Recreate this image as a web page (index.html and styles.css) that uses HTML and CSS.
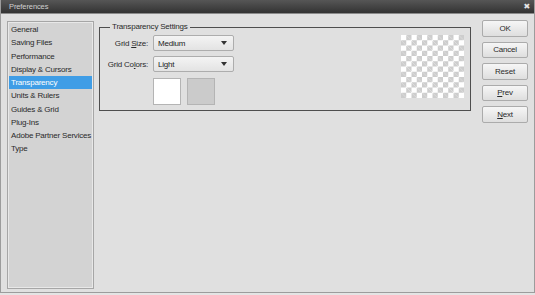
FILE: index.html
```html
<!DOCTYPE html>
<html>
<head>
<meta charset="utf-8">
<link rel="stylesheet" href="styles.css">
</head>
<body>
<div class="window">
  <div class="titlebar">
    <span class="title">Preferences</span>
    <span class="close">&#x2716;</span>
  </div>
  <div class="content">
    <ul class="nav">
      <li>General</li>
      <li>Saving Files</li>
      <li>Performance</li>
      <li>Display &amp; Cursors</li>
      <li class="active">Transparency</li>
      <li>Units &amp; Rulers</li>
      <li>Guides &amp; Grid</li>
      <li>Plug-Ins</li>
      <li>Adobe Partner Services</li>
      <li>Type</li>
    </ul>
    <fieldset class="group">
      <legend>Transparency Settings</legend>
      <div class="group-body">
        <div class="form">
          <label class="lbl">Grid <u>S</u>ize:</label>
          <div class="select">Medium<span class="arrow"></span></div>
          <label class="lbl">Grid Co<u>l</u>ors:</label>
          <div class="select">Light<span class="arrow"></span></div>
          <div></div>
          <div class="swatches">
            <div class="swatch white"></div>
            <div class="swatch gray"></div>
          </div>
        </div>
        <div class="checker"></div>
      </div>
    </fieldset>
    <div class="buttons">
      <div class="btn">OK</div>
      <div class="btn">Cancel</div>
      <div class="btn">Reset</div>
      <div class="btn"><u>P</u>rev</div>
      <div class="btn"><u>N</u>ext</div>
    </div>
  </div>
</div>
</body>
</html>
```
FILE: styles.css
```css
html, body {
  margin: 0;
  padding: 0;
}
body {
  width: 535px;
  height: 295px;
  background: #e4e4e4;
  font-family: "Liberation Sans", Arial, sans-serif;
  font-size: 8px;
  letter-spacing: -0.2px;
  color: #2a2a2a;
  overflow: hidden;
}
.window {
  width: 533px;
  height: 292px;
  background: #e0e0e0;
  border-left: 1px solid #9c9c9c;
  border-right: 1px solid #9c9c9c;
  border-bottom: 1px solid #9c9c9c;
  display: flex;
  flex-direction: column;
}
.titlebar {
  height: 13px;
  background: linear-gradient(#565656, #333333);
  border-bottom: 1px solid #8a8a8a;
  display: flex;
  align-items: center;
  justify-content: space-between;
  padding: 0 4px 0 8px;
}
.title {
  color: #d0d0d0;
  font-size: 7.5px;
  letter-spacing: -0.1px;
}
.close {
  color: #e6e6e6;
  font-family: "DejaVu Sans", sans-serif;
  font-size: 8px;
  font-weight: bold;
}
.content {
  display: flex;
  align-items: flex-start;
  padding: 7px 0 0 6px;
}
.nav {
  list-style: none;
  margin: 0;
  padding: 1px 0 0 0;
  width: 85px;
  height: 265px;
  background: #d3d3d3;
  border: 1px solid #a6a6a6;
  box-shadow: inset 0 0 0 1px #e8e8e8;
}
.nav li {
  height: 13.25px;
  line-height: 13.25px;
  padding-left: 3px;
  color: #2a2a2a;
  white-space: nowrap;
}
.nav li.active {
  background: #3f9de6;
  color: #ffffff;
  margin: 0 1px;
  padding-left: 2px;
}
.group {
  margin: 2px 0 0 5px;
  width: 370px;
  border: 1px solid #4e4e4e;
  padding: 0 0 5px 0;
  min-inline-size: 0;
}
.group legend {
  margin-left: 10px;
  padding: 0 2px;
  line-height: 8px;
  color: #2a2a2a;
}
.group-body {
  display: flex;
  justify-content: space-between;
  align-items: flex-start;
  padding-top: 4px;
}
.form {
  display: grid;
  grid-template-columns: 48px 81px;
  column-gap: 5px;
  row-gap: 5px;
  align-items: center;
}
.lbl {
  text-align: right;
  white-space: nowrap;
}
.select {
  height: 14px;
  border: 1px solid #adadad;
  border-radius: 2px;
  background: linear-gradient(#f4f4f4, #e3e3e3);
  display: flex;
  align-items: center;
  justify-content: space-between;
  padding: 0 6px 0 4px;
  color: #222;
}
.arrow {
  width: 0;
  height: 0;
  border-left: 3.5px solid transparent;
  border-right: 3.5px solid transparent;
  border-top: 4px solid #333;
}
.swatches {
  display: flex;
  gap: 6px;
  margin-top: 1px;
}
.swatch {
  width: 26px;
  height: 25px;
  border: 1px solid #b4b4b4;
}
.swatch.white {
  background: #ffffff;
}
.swatch.gray {
  background: #cbcbcb;
}
.checker {
  width: 63px;
  height: 63px;
  margin-right: 6px;
  background-color: #ffffff;
  background-image:
    linear-gradient(45deg, #cdcdcd 25%, transparent 25%, transparent 75%, #cdcdcd 75%),
    linear-gradient(45deg, #cdcdcd 25%, transparent 25%, transparent 75%, #cdcdcd 75%);
  background-size: 10.5px 10.5px;
  background-position: 0 0, 5.25px 5.25px;
}
.buttons {
  margin-left: 11px;
  margin-top: -1px;
  display: flex;
  flex-direction: column;
  gap: 5px;
}
.btn {
  width: 44px;
  height: 14.5px;
  border: 1px solid #ababab;
  border-radius: 2px;
  background: linear-gradient(#f6f6f6, #dedede);
  display: flex;
  align-items: center;
  justify-content: center;
  color: #2a2a2a;
}
```
